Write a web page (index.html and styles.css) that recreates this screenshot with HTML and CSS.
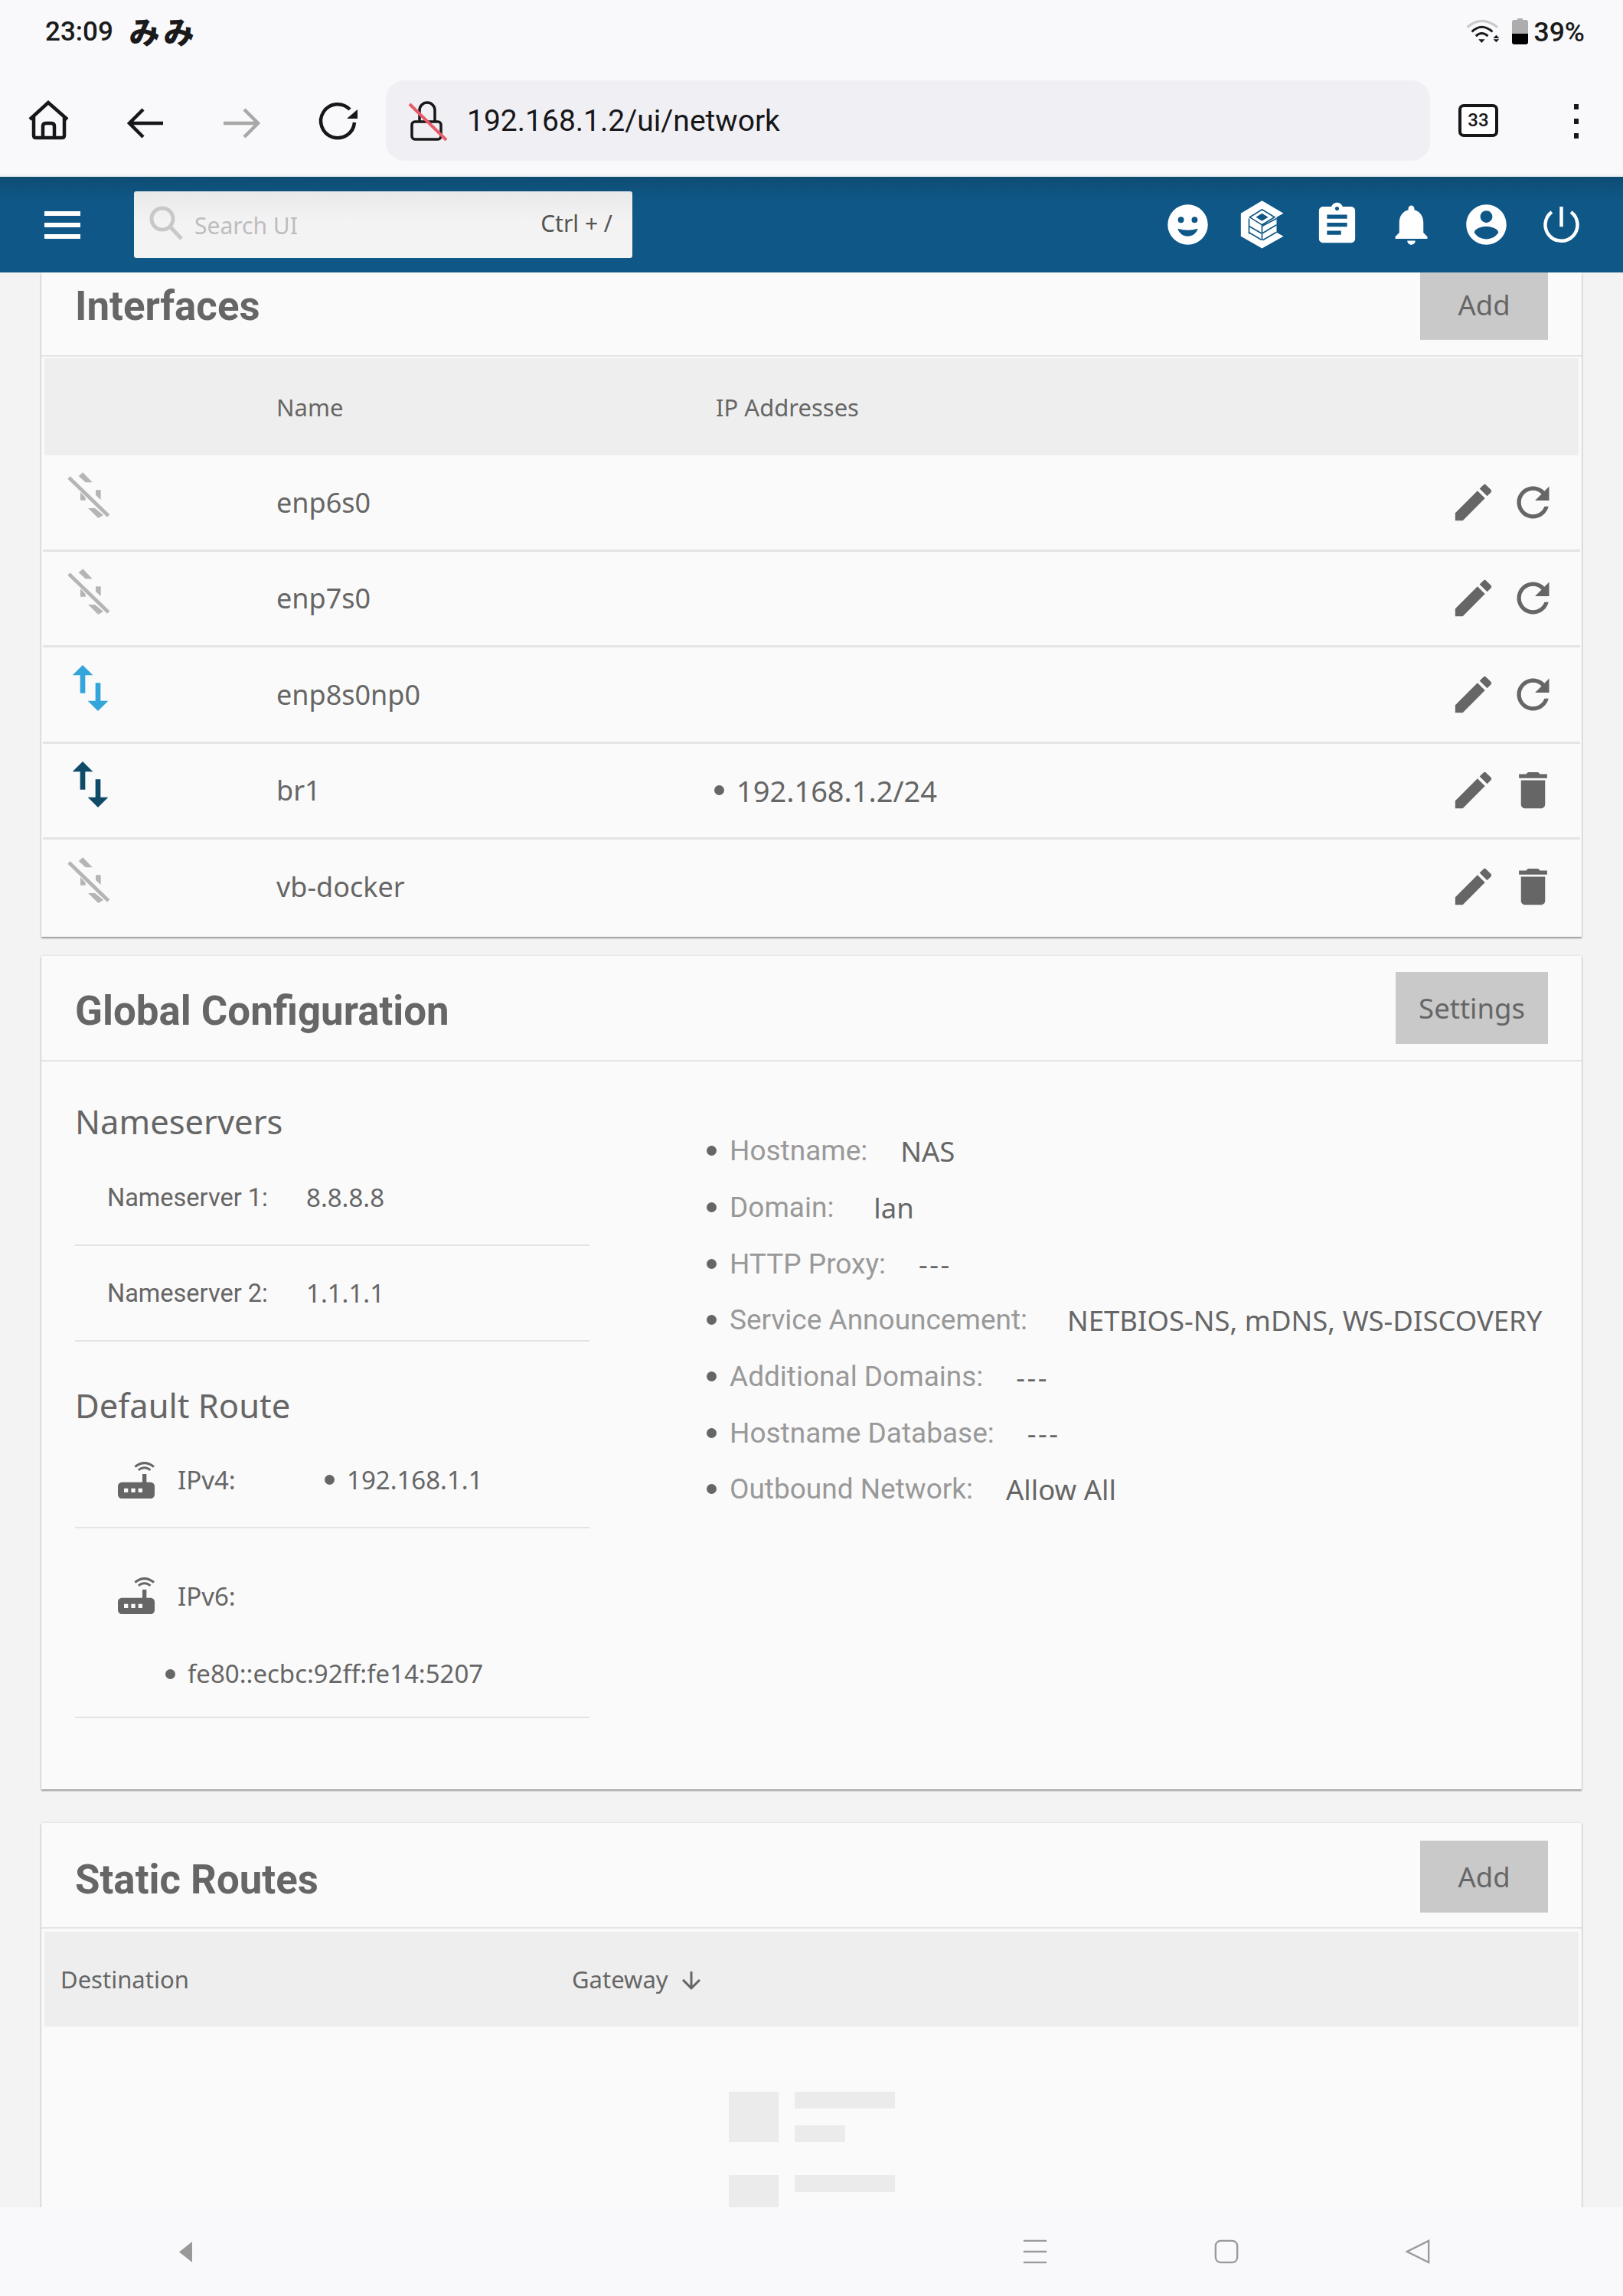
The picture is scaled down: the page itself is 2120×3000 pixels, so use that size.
FILE: index.html
```html
<!DOCTYPE html>
<html lang="en">
<head>
<meta charset="utf-8">
<title>Network</title>
<link rel="stylesheet" href="styles.css">
</head>
<body>
<svg class="defs" width="0" height="0" aria-hidden="true">
  <defs>
    <symbol id="pencil" viewBox="0 0 24 24"><path d="M20.71 7.04c.39-.39.39-1.04 0-1.41l-2.34-2.34c-.37-.39-1.02-.39-1.41 0l-1.84 1.83 3.75 3.75M3 17.25V21h3.75L17.81 9.93l-3.75-3.75L3 17.25z"/></symbol>
    <symbol id="refresh" viewBox="0 0 24 24"><path d="M17.65 6.35C16.2 4.9 14.21 4 12 4c-4.42 0-7.99 3.58-7.99 8s3.57 8 7.99 8c3.73 0 6.84-2.55 7.73-6h-2.08c-.82 2.33-3.04 4-5.65 4-3.31 0-6-2.69-6-6s2.69-6 6-6c1.66 0 3.14.69 4.22 1.78L13 11h7V4l-2.35 2.35z"/></symbol>
    <symbol id="trash" viewBox="0 0 24 24"><path d="M6 19c0 1.1.9 2 2 2h8c1.1 0 2-.9 2-2V7H6v12zM19 4h-3.5l-1-1h-5l-1 1H5v2h14V4z"/></symbol>
    <symbol id="swap" viewBox="0 0 24 24"><path d="M16 17.01V10h-2v7.01h-3L15 21l4-3.99h-3zM9 3L5 6.99h3V14h2V6.99h3L9 3z"/></symbol>
    <symbol id="swapoff" viewBox="24 0 240 240"><path d="M98 42L115 28 152 67H125zM105 105L125 127V137H105zM165 97H185V135L165 117zM135 168H162L195 195 175 207z"/><path class="slash" d="M60 48L215 198"/></symbol>
    <symbol id="router" viewBox="0 0 24 24"><path d="M20.2 5.9l.8-.8C19.6 3.7 17.8 3 16 3s-3.6.7-5 2.1l.8.8C13 4.8 14.5 4.2 16 4.2s3 .6 4.2 1.7zm-.9.8c-.9-.9-2.1-1.4-3.3-1.4s-2.4.5-3.3 1.4l.8.8c.7-.7 1.6-1 2.5-1 .9 0 1.8.3 2.5 1l.8-.8zM19 13h-2V9h-2v4H5c-1.1 0-2 .9-2 2v4c0 1.1.9 2 2 2h14c1.1 0 2-.9 2-2v-4c0-1.1-.9-2-2-2zM8 18H6v-2h2v2zm3.5 0h-2v-2h2v2zm3.5 0h-2v-2h2v2z"/></symbol>
  </defs>
</svg>

<div class="status">
  <div class="status-left"><span class="time">23:09</span><span class="jp">みみ</span></div>
  <div class="status-right">
    <svg class="wifi" viewBox="40 30 140 100"><path class="wifi-off" d="M48 62Q105 12 168 62"/><path class="wifi-on" d="M66 80Q105 42 148 80M82 97Q105 75 130 97"/><path d="M92 110L118 110 105 124zM163 93L175 106H151zM163 122L175 110H151z"/></svg>
    <svg class="batt" viewBox="0 0 22 34"><path class="batt-empty" d="M7 0h7v2h4q3 0 3 3v15H0V5q0-3 3-3h4z"/><path d="M0 20h21v11q0 3-3 3H3q-3 0-3-3z"/></svg>
    <span class="pct">39%</span>
  </div>
</div>

<div class="toolbar">
  <svg class="tb-icon" viewBox="0 0 60 60"><path d="M6 28L30 6l25 22M11 24v25q0 3 3 3h34q3 0 3-3V24M23 52V37q0-4 4-4h7q4 0 4 4v15"/></svg>
  <svg class="tb-icon" viewBox="0 0 60 60"><path d="M54 33H10M28 15L10 33l18 18"/></svg>
  <svg class="tb-icon tb-off" viewBox="0 0 60 60"><path d="M7 33h44M34 15l18 18-18 18"/></svg>
  <svg class="tb-icon" viewBox="0 0 60 60"><path d="M46 15A22 22 0 1 0 52 32"/><path class="tb-fill" d="M56 15V27H42z"/></svg>
  <div class="url">
    <svg class="lock" viewBox="0 0 52 52"><rect x="5" y="27" width="38" height="23" rx="4"/><path d="M15 27V12a10 10 0 0 1 20 0v15"/><path class="lock-slash" d="M2 4l48 47"/></svg>
    <span class="url-text">192.168.1.2/ui/network</span>
  </div>
  <div class="tabs">33</div>
  <div class="dots"><i></i><i></i><i></i></div>
</div>

<header class="topbar">
  <div class="burger"><i></i><i></i><i></i></div>
  <div class="search">
    <svg class="search-ic" viewBox="0 0 46 46"><circle cx="18" cy="18" r="14"/><path d="M28 28l15 16"/></svg>
    <span class="search-ph">Search UI</span>
    <span class="search-key">Ctrl + /</span>
  </div>
  <div class="top-icons">
    <svg class="ti" viewBox="0 0 24 24"><path fill-rule="evenodd" d="M12 2a10 10 0 1 0 0 20 10 10 0 0 0 0-20zM8.600 8.100a1.500 1.500 0 1 1 0 3 1.500 1.500 0 0 1 0-3zm6.800 0a1.500 1.500 0 1 1 0 3 1.500 1.500 0 0 1 0-3zM7 14q5 1.600 10 0c-.6 2.300-2.700 3.800-5 3.800s-4.400-1.500-5-3.800z"/></svg>
    <svg class="ti" viewBox="318.500 34.500 189 189"><path d="M413 35L497 85 470 100V160L497 175 413 222 330 175V85z"/><path class="tc-line" d="M413 70L462 100 413 130 365 100zM362 105V165M413 130V190M362 135L410 163M362 160L410 188M470 105L413 135M470 130L416 162M470 158L416 190"/><path class="tc-fill" d="M413 85L437 100 413 115 389 100z"/></svg>
    <svg class="ti" viewBox="0 0 24 24"><path d="M19 3h-4.180C14.400 1.840 13.300 1 12 1c-1.300 0-2.400.84-2.820 2H5c-1.100 0-2 .9-2 2v14c0 1.100.9 2 2 2h14c1.100 0 2-.9 2-2V5c0-1.100-.9-2-2-2zm-7 0c.55 0 1 .45 1 1s-.45 1-1 1-1-.45-1-1 .45-1 1-1zm2 14H7v-2h7v2zm3-4H7v-2h10v2zm0-4H7V7h10v2z"/></svg>
    <svg class="ti" viewBox="0 0 24 24"><path d="M12 22c1.100 0 2-.9 2-2h-4c0 1.100.89 2 2 2zm6-6v-5c0-3.070-1.640-5.640-4.500-6.320V4c0-.83-.67-1.500-1.500-1.500s-1.500.67-1.500 1.500v.68C7.630 5.360 6 7.920 6 11v5l-2 2v1h16v-1l-2-2z"/></svg>
    <svg class="ti" viewBox="0 0 24 24"><path d="M12 2C6.480 2 2 6.480 2 12s4.480 10 10 10 10-4.480 10-10S17.520 2 12 2zm0 3c1.660 0 3 1.340 3 3s-1.340 3-3 3-3-1.340-3-3 1.340-3 3-3zm0 14.200c-2.500 0-4.710-1.280-6-3.220.03-1.990 4-3.080 6-3.080 1.990 0 5.970 1.090 6 3.080-1.290 1.940-3.500 3.220-6 3.220z"/></svg>
    <svg class="ti ti-power" viewBox="0 0 24 24"><path d="M7.200 5.700a8 8 0 1 0 9.600 0M12 3v10"/></svg>
  </div>
</header>

<main class="content">
  <section class="card card-if">
    <div class="card-head head-flush">
      <h2 class="card-title">Interfaces</h2>
      <button class="btn btn-add">Add</button>
    </div>
    <div class="thead if-grid">
      <span></span><span>Name</span><span>IP Addresses</span><span></span>
    </div>
    <div class="trow if-grid">
      <svg class="state state-off"><use href="#swapoff"/></svg><span>enp6s0</span><span></span>
      <div class="actions"><svg class="act"><use href="#pencil"/></svg><svg class="act"><use href="#refresh"/></svg></div>
    </div>
    <div class="trow if-grid">
      <svg class="state state-off"><use href="#swapoff"/></svg><span>enp7s0</span><span></span>
      <div class="actions"><svg class="act"><use href="#pencil"/></svg><svg class="act"><use href="#refresh"/></svg></div>
    </div>
    <div class="trow if-grid">
      <svg class="state state-lit"><use href="#swap"/></svg><span>enp8s0np0</span><span></span>
      <div class="actions"><svg class="act"><use href="#pencil"/></svg><svg class="act"><use href="#refresh"/></svg></div>
    </div>
    <div class="trow if-grid">
      <svg class="state state-dark"><use href="#swap"/></svg><span>br1</span><span class="bul ip-bul">192.168.1.2/24</span>
      <div class="actions"><svg class="act"><use href="#pencil"/></svg><svg class="act"><use href="#trash"/></svg></div>
    </div>
    <div class="trow trow-last if-grid">
      <svg class="state state-off"><use href="#swapoff"/></svg><span>vb-docker</span><span></span>
      <div class="actions"><svg class="act"><use href="#pencil"/></svg><svg class="act"><use href="#trash"/></svg></div>
    </div>
  </section>

  <section class="card card-global">
    <div class="card-head">
      <h2 class="card-title">Global Configuration</h2>
      <button class="btn">Settings</button>
    </div>
    <div class="global-body">
      <div class="global-left">
        <h3 class="sub">Nameservers</h3>
        <div class="kv kv-first"><span class="kv-k">Nameserver 1:</span><span>8.8.8.8</span></div>
        <div class="kv"><span class="kv-k">Nameserver 2:</span><span>1.1.1.1</span></div>
        <h3 class="sub sub-second">Default Route</h3>
        <div class="route route-v4">
          <svg class="router"><use href="#router"/></svg><span class="route-k">IPv4:</span><span class="bul">192.168.1.1</span>
        </div>
        <div class="route-v6">
          <div class="route route-v6-head"><svg class="router"><use href="#router"/></svg><span class="route-k">IPv6:</span></div>
          <div class="bul v6-addr">fe80::ecbc:92ff:fe14:5207</div>
        </div>
      </div>
      <ul class="facts">
        <li class="fact"><span class="fact-k">Hostname:</span><span>NAS</span></li>
        <li class="fact fact-wide"><span class="fact-k">Domain:</span><span>lan</span></li>
        <li class="fact"><span class="fact-k">HTTP Proxy:</span><span class="dash">---</span></li>
        <li class="fact fact-wide"><span class="fact-k">Service Announcement:</span><span>NETBIOS-NS, mDNS, WS-DISCOVERY</span></li>
        <li class="fact"><span class="fact-k">Additional Domains:</span><span class="dash">---</span></li>
        <li class="fact"><span class="fact-k">Hostname Database:</span><span class="dash">---</span></li>
        <li class="fact"><span class="fact-k">Outbound Network:</span><span>Allow All</span></li>
      </ul>
    </div>
  </section>

  <section class="card card-routes">
    <div class="card-head head-routes">
      <h2 class="card-title">Static Routes</h2>
      <button class="btn btn-add">Add</button>
    </div>
    <div class="thead sr-grid">
      <span>Destination</span>
      <span class="sorted">Gateway <svg class="sort" viewBox="0 0 24 24"><path d="M20 12l-1.410-1.410L13 16.170V4h-2v12.170l-5.580-5.590L4 12l8 8 8-8z"/></svg></span>
    </div>
    <div class="skeleton">
      <div class="sk-row"><i class="sk-a"></i><div class="sk-lines"><i class="sk-b"></i><i class="sk-c"></i></div></div>
      <div class="sk-row"><i class="sk-a"></i><div class="sk-lines"><i class="sk-b"></i><i class="sk-c"></i></div></div>
    </div>
  </section>
</main>

<nav class="navbar">
  <svg class="nav-tri" viewBox="2 2 16 26" preserveAspectRatio="none"><path d="M18 2L2 15l16 13z"/></svg>
  <div class="nav-right">
    <svg class="nav-ic" viewBox="0 0 36 36"><path d="M2 3h32M2 18h32M2 33h32"/></svg>
    <svg class="nav-ic" viewBox="0 0 36 36"><rect x="3" y="3" width="30" height="30" rx="7"/></svg>
    <svg class="nav-ic" viewBox="0 0 36 36"><path d="M33 3L3 18l30 15z"/></svg>
  </div>
</nav>
</body>
</html>
```

FILE: styles.css
```css
* { box-sizing: border-box; }
html, body { margin: 0; padding: 0; }
body {
  width: 2120px;
  height: 3000px;
  overflow: hidden;
  display: flex;
  flex-direction: column;
  background: #f3f3f3;
  font-family: "Noto Sans", "Liberation Sans", sans-serif;
  color: #666;
}
.defs { position: absolute; }
.slash { fill: none; stroke: currentColor; stroke-width: 14; }

/* status bar */
.status {
  height: 105px;
  flex: none;
  background: #f9f9fb;
  display: flex;
  justify-content: space-between;
  align-items: center;
  padding: 0 50px 22px 59px;
  color: #1a1a1a;
  font-family: Roboto, sans-serif;
  font-weight: 500;
}
.status-left { display: flex; align-items: center; gap: 21px; }
.time { font-size: 35px; }
.jp { font-family: "Noto Sans CJK JP", sans-serif; font-weight: 900; font-size: 40px; letter-spacing: 5px; line-height: 1; margin-bottom: 3px; }
.status-right { display: flex; align-items: center; gap: 7px; }
.wifi { width: 46px; height: 33px; fill: #1a1a1a; margin-right: 8px; }
.wifi-off, .wifi-on { fill: none; stroke-width: 9; }
.wifi-off { stroke: #c9c9c9; }
.wifi-on { stroke: #1a1a1a; }
.batt { width: 22px; height: 34px; fill: #000; margin-bottom: 2px; }
.batt-empty { fill: #adadad; }
.pct { font-size: 35.500px; }

/* browser toolbar */
.toolbar {
  height: 126px;
  flex: none;
  background: #f9f9fb;
  display: flex;
  align-items: flex-start;
  padding-left: 33px;
  border-bottom: 3px solid #f1f1f3;
}
.tb-icon { width: 60px; height: 60px; margin: 23px 66px 0 0; fill: none; stroke: #17171a; stroke-width: 4.500; }
.tb-icon:nth-child(4) { margin-right: 33px; }
.tb-off { stroke: #a8a8a8; }
.tb-fill { fill: #17171a; stroke: none; }
.url {
  width: 1364px;
  height: 105px;
  background: #f0f0f4;
  border-radius: 24px;
  display: flex;
  align-items: center;
  padding-left: 29px;
  gap: 25px;
}
.lock { width: 52px; height: 52px; fill: none; stroke: #17171a; stroke-width: 3.500; }
.lock-slash { stroke: #e85a6a; stroke-width: 4; }
.url-text { font: 400 39px Roboto, sans-serif; color: #17171a; }
.tabs {
  width: 52px;
  height: 43px;
  margin: 31px 0 0 37px;
  border: 4px solid #17171a;
  border-radius: 7px;
  background: #fff;
  color: #17171a;
  font: 500 24px/35px Roboto, sans-serif;
  text-align: center;
}
.dots { margin: 31px 0 0 99px; display: flex; flex-direction: column; gap: 12px; }
.dots i { width: 6px; height: 7px; background: #17171a; display: block; }

/* app top bar */
.topbar {
  height: 125px;
  flex: none;
  background: linear-gradient(#0e4d74, #0f5787 25%);
  display: flex;
  align-items: center;
  position: relative;
  z-index: 2;
  padding-left: 58px;
}
.burger { display: flex; flex-direction: column; gap: 9px; width: 47px; margin-right: 70px; }
.burger i { height: 6px; background: #fff; display: block; }
.search {
  width: 651px;
  height: 87px;
  background: linear-gradient(#e9e9e9, #f3f3f3 45%);
  border-radius: 3px;
  display: flex;
  align-items: center;
  padding: 0 26px 0 19px;
}
.search-ic { width: 46px; height: 46px; fill: none; stroke: #c8c8c8; stroke-width: 5; margin-bottom: 5px; }
.search-ph { font-size: 30px; color: #bdbdbd; margin-left: 14px; flex: 1; padding-top: 2px; }
.search-key { font-size: 30px; color: #555; padding-bottom: 4px; }
.top-icons { margin-left: auto; display: flex; align-items: center; gap: 34.600px; padding-right: 49.500px; }
.ti { width: 63px; height: 63px; fill: #fff; }
.ti-power { fill: none; stroke: #fff; stroke-width: 1.700; }
.tc-line { fill: none; stroke: #0f5787; stroke-width: 5; }
.tc-fill { fill: #0f5787; }

/* content */
.content { height: 2528px; flex: none; overflow: hidden; display: flex; flex-direction: column; align-items: center; }
.card {
  width: 2012px;
  flex: none;
  background: #fafafa;
  box-shadow: 0 2px 2px rgba(0, 0, 0, .35), 0 0 3px rgba(0, 0, 0, .12);
}
.card-if { height: 868px; }
.card-global { height: 1089px; margin-top: 25px; }
.card-routes { margin-top: 44px; height: 700px; }
.card-head {
  height: 138px;
  display: flex;
  justify-content: space-between;
  align-items: center;
  padding: 0 44px;
  border-bottom: 2px solid #e4e4e4;
}
.head-flush { height: 110px; align-items: flex-start; }
.head-routes { padding-top: 4px; }
.card-title { margin: 0; padding-top: 8px; font: 700 52.800px/88px Roboto, sans-serif; color: #666; }
.head-flush .card-title { padding-top: 0; }
.btn {
  height: 94px;
  padding: 0 30px;
  border: 0;
  background: #c9c9c9;
  color: #666;
  font: 400 36.500px "Noto Sans", sans-serif;
}
.btn-add { width: 167px; padding: 0; }
.head-flush .btn { height: 88px; padding-bottom: 4px; }

/* tables */
.thead, .trow { display: grid; align-items: center; font-size: 36px; }
.thead { margin: 2px 4px 0; height: 127px; background: #eee; font-size: 31px; }
.trow { margin: 0 2px; height: 125.500px; border-bottom: 3px solid #e4e4e4; }
.trow-last { border-bottom: 0; height: 127px; padding-bottom: 4px; }
.if-grid { grid-template-columns: 305px 574px 1fr auto; }
.thead.if-grid { grid-template-columns: 303px 574px 1fr auto; }
.sr-grid { grid-template-columns: 668px 1fr; padding-left: 21px; height: 124px; margin-top: 4px; }
.state { width: 80px; height: 80px; margin: 0 0 16px 22px; fill: currentColor; }
.state-off { color: #b5b5b5; }
.state-lit { color: #33a5da; }
.state-dark { color: #0f4b69; }
.actions { display: flex; gap: 15px; padding-right: 30px; }
.act { width: 63px; height: 63px; fill: #666; }
.bul { display: flex; align-items: center; }
.bul::before { content: ""; width: 13px; height: 13px; border-radius: 50%; background: #666; margin-right: 16px; }
.ip-bul { font-size: 38px; }
.ip-bul::before { margin-left: -2px; }
.sorted { display: flex; align-items: center; gap: 12px; }
.sort { width: 36px; height: 36px; fill: #666; margin-top: 4px; }

/* global configuration */
.global-body { display: flex; padding: 48px 0 0 44px; }
.global-left { width: 672px; flex: none; }
.sub { margin: 0; font-size: 43.500px; line-height: 60px; font-weight: 400; color: #666; }
.kv {
  height: 125px;
  display: flex;
  align-items: center;
  padding-left: 42px;
  font-size: 33px;
  border-bottom: 2px solid #e4e4e4;
}
.kv-first { height: 133px; padding-top: 8px; }
.kv-k { width: 260px; font-family: Roboto, sans-serif; font-size: 32.500px; }
.sub-second { margin-top: 53px; }
.route { display: flex; align-items: center; font-size: 33px; }
.route-v4 { height: 131px; padding: 6px 0 0 48px; border-bottom: 2px solid #e4e4e4; }
.route-v6 { height: 248px; border-bottom: 2px solid #e4e4e4; }
.route-v6-head { height: 168px; padding: 8px 0 0 48px; }
.router { width: 64px; height: 64px; fill: #666; margin-right: 22px; }
.route-k { width: 192px; }
.v6-addr { font-size: 33px; line-height: 44px; padding-left: 118px; }
.facts {
  list-style: none;
  margin: 0 0 0 153px;
  padding: 32px 0 0;
  display: flex;
  flex-direction: column;
  font-size: 36.500px;
  white-space: nowrap;
}
.fact { height: 73.700px; display: flex; align-items: center; gap: 43px; }
.fact-wide { gap: 52px; }
.fact::before { content: ""; width: 13px; height: 13px; border-radius: 50%; background: #666; }
.fact::before { margin-right: -26px; }
.fact-wide::before { margin-right: -35px; }
.fact-k { color: #999; font-family: Roboto, sans-serif; font-size: 37px; }
.dash { letter-spacing: 2.500px; }

/* skeleton */
.skeleton { padding: 85px 0 0 898px; display: flex; flex-direction: column; gap: 43px; }
.sk-row { display: flex; gap: 21px; }
.sk-row i { display: block; background: #ebebeb; }
.sk-a { width: 65px; height: 66px; }
.sk-lines { display: flex; flex-direction: column; gap: 22px; }
.sk-b { width: 131px; height: 22px; }
.sk-c { width: 66px; height: 22px; }

/* system navigation */
.navbar {
  flex: 1;
  position: relative;
  z-index: 2;
  background: #f9f9fb;
  display: flex;
  align-items: center;
  padding: 0 251px 0 234px;
  justify-content: space-between;
}
.nav-tri { width: 17px; height: 27px; fill: #999; }
.nav-right { display: flex; gap: 216px; }
.nav-ic { width: 34px; height: 34px; fill: none; stroke: #9a9a9a; stroke-width: 2.500; }
```
